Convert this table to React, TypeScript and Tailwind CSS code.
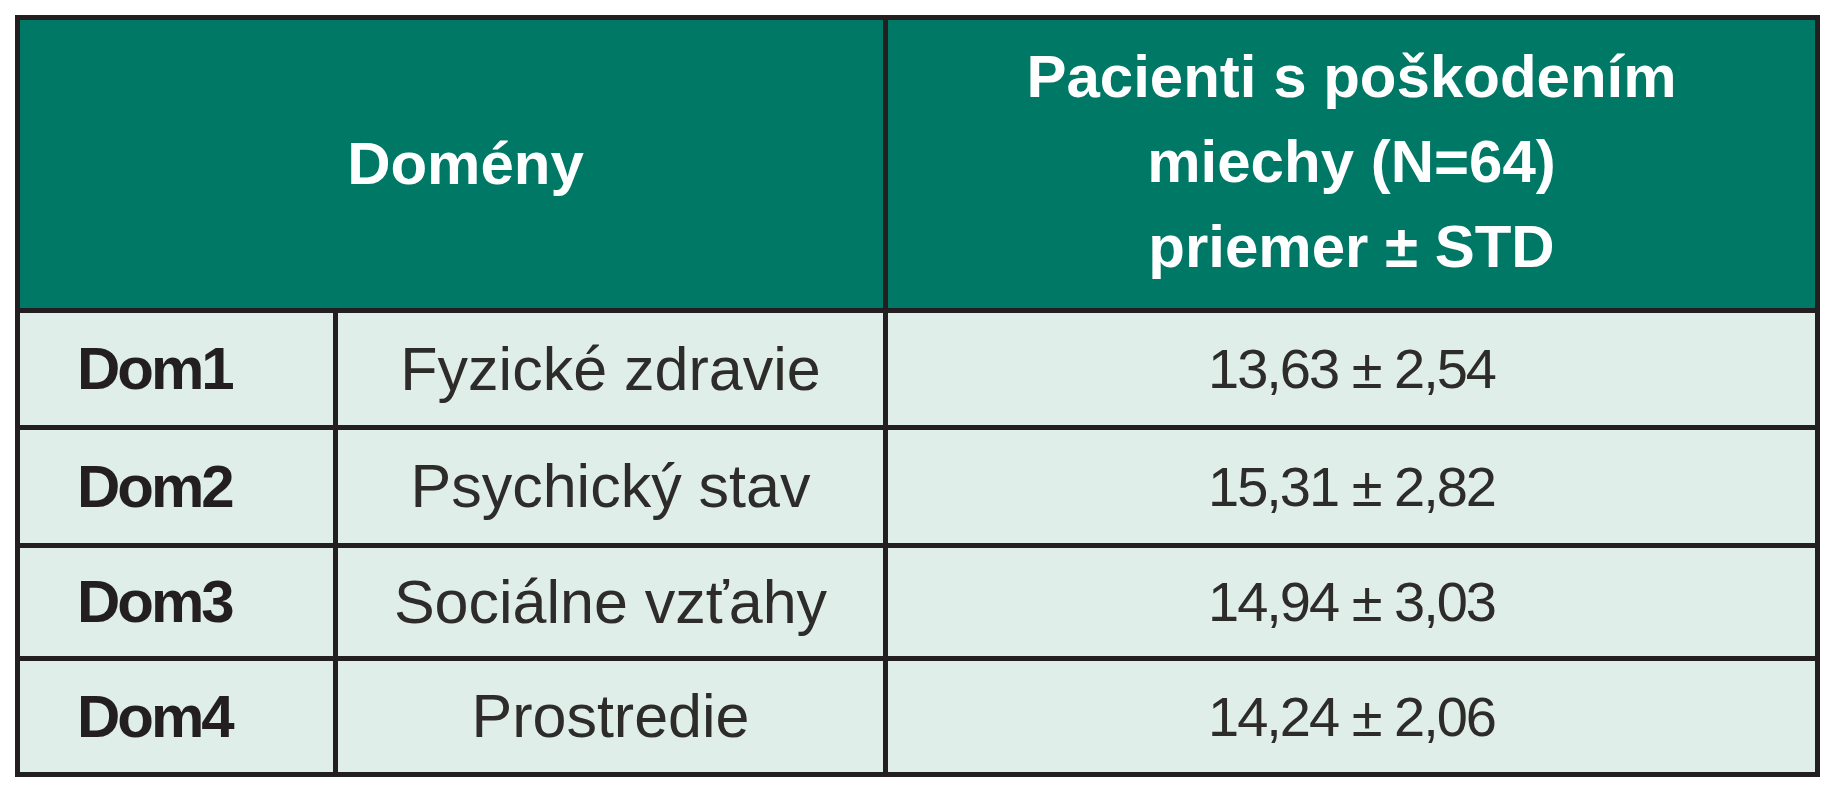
import React from "react";

const rows = [
  { dom: "Dom1", name: "Fyzické zdravie", val: "13,63 ± 2,54", h: "h-[112px]" },
  { dom: "Dom2", name: "Psychický stav", val: "15,31 ± 2,82", h: "h-[113px]" },
  { dom: "Dom3", name: "Sociálne vzťahy", val: "14,94 ± 3,03", h: "h-[108px]" },
  { dom: "Dom4", name: "Prostredie", val: "14,24 ± 2,06", h: "h-[111px]" },
];

export default function App() {
  return (
    <div className="min-h-screen bg-white pt-[15px] pl-[15px] font-['Liberation_Sans',Arial,sans-serif]">
      <table className="table-fixed w-[1805px] border-separate border-spacing-[5px] bg-[#231f20]">
        <colgroup>
          <col className="w-[313px]" />
          <col className="w-[545px]" />
          <col className="w-[927px]" />
        </colgroup>
        <thead>
          <tr className="h-[288px]">
            <th
              colSpan={2}
              className="bg-[#007866] text-white font-bold text-[60px] leading-none text-center align-middle pl-[28px]"
            >
              Domény
            </th>
            <th className="bg-[#007866] text-white font-bold text-[60px] leading-[85px] text-center align-middle pb-[6px]">
              Pacienti s poškodením
              <br />
              miechy (N=64)
              <br />
              priemer ± STD
            </th>
          </tr>
        </thead>
        <tbody>
          {rows.map((r) => (
            <tr key={r.dom} className={r.h}>
              <td className="bg-[#e0eee9] pl-[57px] align-middle text-[60px] font-bold tracking-[-3px] text-[#231f20] leading-none">
                {r.dom}
              </td>
              <td className="bg-[#e0eee9] text-center align-middle text-[61px] text-[#2e2c2b] leading-none">
                {r.name}
              </td>
              <td className="bg-[#e0eee9] text-center align-middle text-[56px] tracking-[-2px] text-[#2e2c2b] leading-none">
                {r.val}
              </td>
            </tr>
          ))}
        </tbody>
      </table>
    </div>
  );
}
